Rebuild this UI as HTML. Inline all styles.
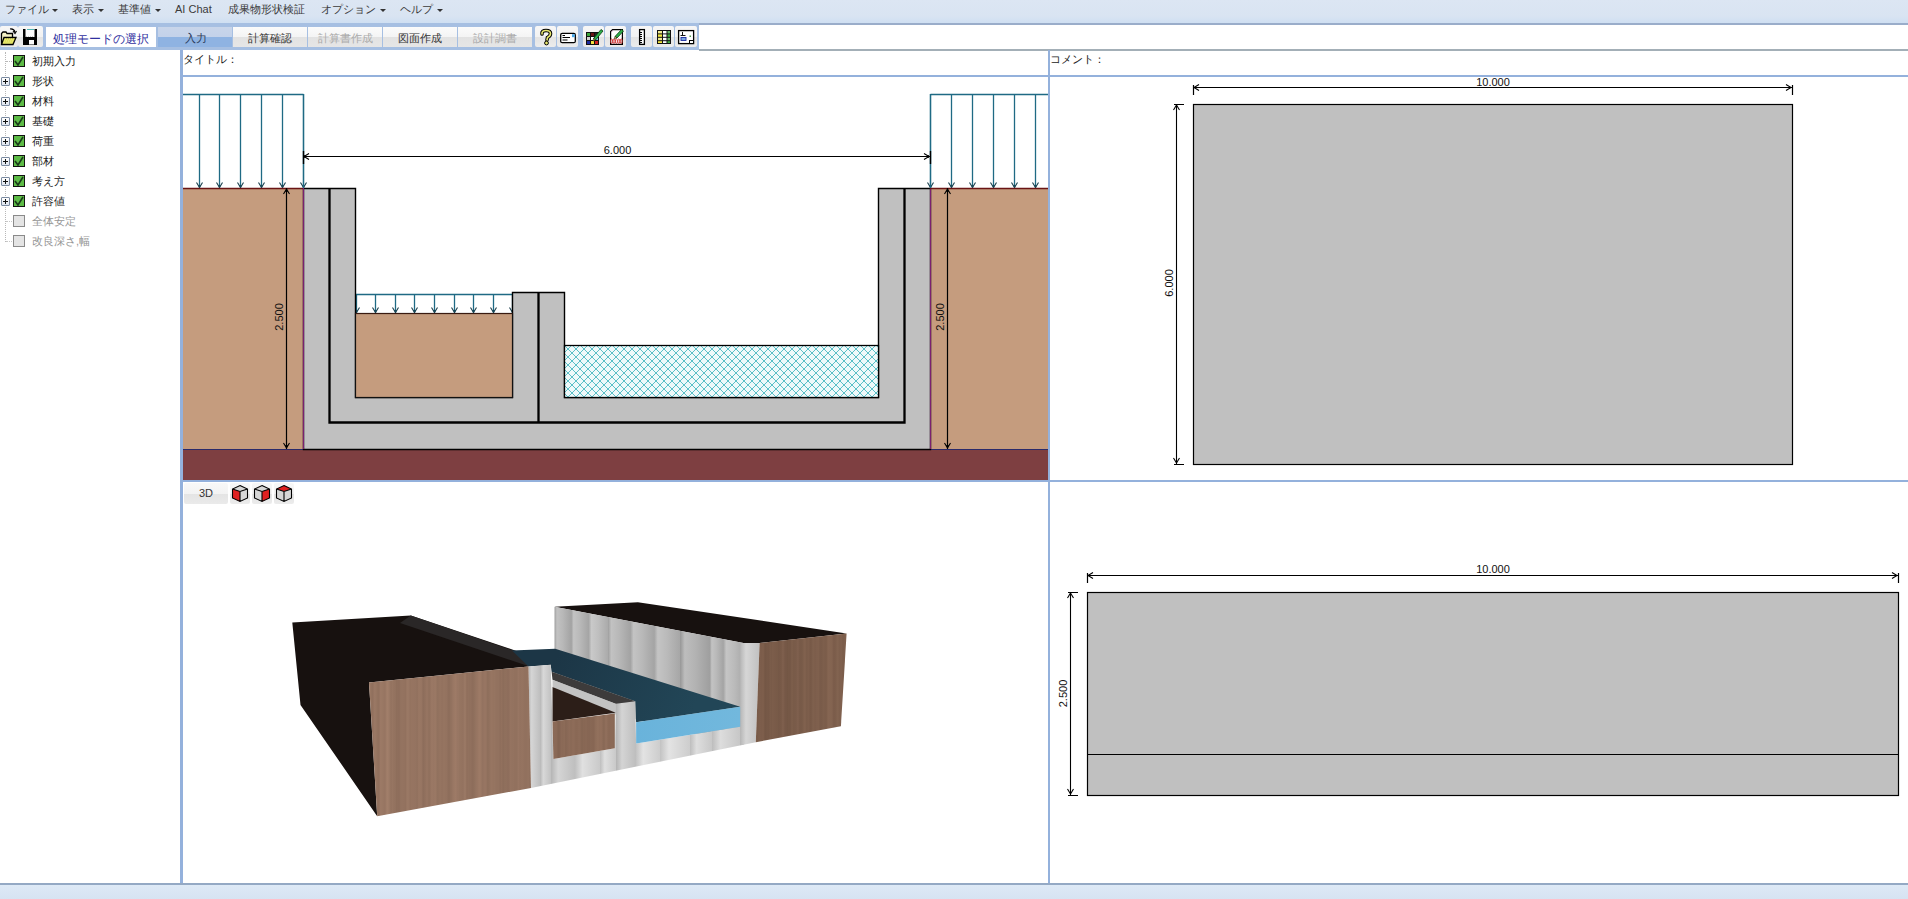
<!DOCTYPE html>
<html><head><meta charset="utf-8">
<style>
*{margin:0;padding:0;box-sizing:border-box}
html,body{width:1908px;height:899px;overflow:hidden;background:#fff;font-family:"Liberation Sans",sans-serif;color:#222}
.a{position:absolute}
#menubar{left:0;top:0;width:1908px;height:23px;background:linear-gradient(#dce6f3 0%,#d9e4f2 70%,#cfdff2 100%)}
.mi{position:absolute;top:3px;font-size:11px;color:#3a3a3a;white-space:nowrap;line-height:12px}
.dd{position:absolute;top:9px;width:0;height:0;border-left:3px solid transparent;border-right:3px solid transparent;border-top:3px solid #333}
#toolbar{left:0;top:23px;width:699px;height:27px;background:#a6bfe2}
#tbright{left:699px;top:23px;width:1209px;height:28px;background:#fff;border-top:2px solid #9aadca;border-bottom:2px solid #a3afb7}
.btn{position:absolute;top:3px;height:21px;background:linear-gradient(#f7f7f7 0%,#f2f2f2 50%,#e3e3e3 51%,#ececec 100%);border-radius:2px}
.tab{position:absolute;top:4px;height:20px;font-size:11px;text-align:center;line-height:22px;background:linear-gradient(#fbfbfb 0%,#f4f4f4 50%,#e2e2e2 51%,#e6e6e6 100%)}
.tree{position:absolute;left:0;font-size:11px;line-height:12px;white-space:nowrap}
.cb{position:absolute;left:13px;width:12px;height:12px;border:1px solid #111;background:#5dbb46}
.cbg{position:absolute;left:13px;width:12px;height:12px;border:1px solid #8a8a8a;background:#e4e4e4}
.pl{position:absolute;left:1px;width:9px;height:9px;border:1px solid #7a8aa0;border-radius:1px;background:linear-gradient(#fff,#dde4ee)}
.pl:before{content:"";position:absolute;left:1px;top:3px;width:5px;height:1px;background:#111}
.pl:after{content:"";position:absolute;left:3px;top:1px;width:1px;height:5px;background:#111}
.tt{position:absolute;left:32px;font-size:11px;color:#222}
</style></head><body>
<div id="menubar" class="a">
 <span class="mi" style="left:5px">ファイル</span><i class="dd" style="left:52px"></i>
 <span class="mi" style="left:72px">表示</span><i class="dd" style="left:98px"></i>
 <span class="mi" style="left:118px">基準値</span><i class="dd" style="left:155px"></i>
 <span class="mi" style="left:175px">AI Chat</span>
 <span class="mi" style="left:228px">成果物形状検証</span>
 <span class="mi" style="left:321px">オプション</span><i class="dd" style="left:380px"></i>
 <span class="mi" style="left:400px">ヘルプ</span><i class="dd" style="left:437px"></i>
</div>
<div id="toolbar" class="a">
 <div class="btn" style="left:0;width:18px"></div>
 <div class="btn" style="left:18px;width:25px"></div>
 <svg class="a" style="left:0;top:3px" width="42" height="21" viewBox="0 26 42 21">
  <path d="M1.5 44.5 V33.5 L3 32 H6 L7 33.5 H12.5 V37" fill="#f6f3c8" stroke="#000" stroke-width="1.3"/>
  <path d="M1.5 44.5 L4 37.5 H16 L13 44.5 Z" fill="#dede5a" stroke="#000" stroke-width="1.3"/>
  <path d="M5 39 H14 M4 41 H13 M3.5 43 H12" stroke="#f2f29a" stroke-width="0.8" stroke-dasharray="1 1"/>
  <path d="M10 29 Q14 28.5 15 32" fill="none" stroke="#000" stroke-width="1.2"/>
  <path d="M13 31 L15 33.5 L16.5 31" fill="none" stroke="#000" stroke-width="1.1"/>
  <path d="M23 29 H37 V45 H23 Z" fill="#000"/>
  <rect x="25.5" y="29" width="9" height="8" fill="#fafafa"/>
  <path d="M26 36.5 H34" stroke="#bbb" stroke-width="0.8" stroke-dasharray="1 1"/>
  <rect x="29" y="40" width="5" height="4.5" fill="#fafafa"/>
  <rect x="27" y="29" width="7" height="0.8" fill="#2aa8a8"/>
 </svg>
 <div class="a" style="left:46px;top:4px;width:110px;height:20px;background:#fff"></div>
 <span class="a" style="left:53px;top:9px;font-size:12px;line-height:14px;color:#3030a0;white-space:nowrap">処理モードの選択</span>
 <div class="a" style="left:158px;top:4px;width:74px;height:20px;background:linear-gradient(#c8d5ea 0%,#c3d2ea 50%,#8fb3e2 51%,#8fb3e2 100%)"></div>
 <span class="a" style="left:185px;top:9px;font-size:11px;line-height:12px;color:#2a3a5a">入力</span>
 <div class="tab" style="left:233px;width:74px;color:#333">計算確認</div>
 <div class="tab" style="left:308px;width:74px;color:#aaa">計算書作成</div>
 <div class="tab" style="left:383px;width:74px;color:#333">図面作成</div>
 <div class="tab" style="left:458px;width:74px;color:#aaa">設計調書</div>
 <div class="btn" style="left:535px;width:21px"></div>
 <div class="btn" style="left:557px;width:21px"></div>
 <div class="btn" style="left:583px;width:21px"></div>
 <div class="btn" style="left:605px;width:21px"></div>
 <div class="btn" style="left:631px;width:21px"></div>
 <div class="btn" style="left:653px;width:21px"></div>
 <div class="btn" style="left:675px;width:22px"></div>
<svg class="a" style="left:535px;top:3px" width="162" height="21" viewBox="535 26 162 21">
  <!-- ? -->
  <path d="M542 34 Q541.5 30.5 546 30.5 Q550.5 30.5 550.5 33.5 Q550.5 36 547.5 37.5 L547 40" fill="none" stroke="#000" stroke-width="3.6" stroke-linecap="round"/>
  <path d="M542 34 Q541.5 30.5 546 30.5 Q550.5 30.5 550.5 33.5 Q550.5 36 547.5 37.5 L547 40" fill="none" stroke="#e6e66e" stroke-width="1.6" stroke-linecap="round"/>
  <circle cx="546.5" cy="43" r="1.9" fill="#e6e66e" stroke="#000" stroke-width="1"/>
  <!-- card -->
  <rect x="560.7" y="33.4" width="14.6" height="9.3" rx="1.5" fill="#fff" stroke="#000" stroke-width="1.3"/>
  <rect x="562.5" y="35" width="2.5" height="1" fill="#000"/><rect x="562.5" y="37" width="7.5" height="1" fill="#000"/><rect x="562.5" y="39.5" width="5" height="1" fill="#000"/>
  <rect x="572" y="34.2" width="2.8" height="3" fill="#4aa8e8"/>
  <!-- grid pencil -->
  <rect x="586" y="32" width="13" height="13" fill="#111"/>
  <rect x="587" y="33" width="3" height="3" fill="#3aa63a"/><rect x="591" y="33" width="3" height="3" fill="#6a1414"/><rect x="595" y="33" width="3" height="3" fill="#222"/>
  <rect x="587" y="37" width="3" height="3" fill="#d0d0d0"/><rect x="591" y="37" width="3" height="3" fill="#fff"/><rect x="595" y="37" width="3" height="3" fill="#70d0e8"/>
  <rect x="587" y="41" width="3" height="3" fill="#1a2aa0"/><rect x="591" y="41" width="3" height="3" fill="#f2e040"/><rect x="595" y="41" width="3" height="3" fill="#d02020"/>
  <path d="M593.5 38.5 L601 29.5 L603 31 L595.5 40 Z" fill="#2cb04a" stroke="#0a3a10" stroke-width="0.8"/>
  <path d="M593.5 38.5 L595.5 40 L593 41 Z" fill="#f0e060" stroke="#000" stroke-width="0.5"/>
  <!-- doc pencil -->
  <path d="M610.6 31.5 L612.6 29.6 H622.4 V44.4 H610.6 Z" fill="#fff" stroke="#000" stroke-width="1.2"/>
  <path d="M611.2 31.5 L612.6 30.2 V31.5 Z" fill="#e8a0d0"/>
  <g fill="none" stroke="#d03030" stroke-width="0.9"><ellipse cx="611.6" cy="41.2" rx="1" ry="2.3"/><ellipse cx="614" cy="41.2" rx="1" ry="2.3"/><ellipse cx="616.4" cy="41.2" rx="1" ry="2.3"/><ellipse cx="618.8" cy="41.2" rx="1" ry="2.3"/><ellipse cx="621.2" cy="41.2" rx="1" ry="2.3"/></g>
  <path d="M615 36.5 L621.5 29.5 L623.5 31 L617 38 Z" fill="#2cb04a" stroke="#0a3a10" stroke-width="0.8"/>
  <path d="M615 36.5 L617 38 L614.2 38.8 Z" fill="#f0e060" stroke="#000" stroke-width="0.5"/>
  <!-- ruler -->
  <rect x="639.6" y="29.6" width="4.8" height="14.8" fill="#fff" stroke="#000" stroke-width="1.3"/>
  <path d="M640 32.5h2M640 34.5h1.5M640 36.5h2M640 38.5h1.5M640 40.5h2M640 42.5h1.5" stroke="#000" stroke-width="1" shape-rendering="crispEdges"/>
  <!-- table -->
  <rect x="657" y="30" width="14" height="14" fill="#111"/>
  <rect x="658" y="31" width="4" height="2.4" fill="#f0ea90"/><rect x="663" y="31" width="3.5" height="2.4" fill="#fff"/><rect x="667.5" y="31" width="2.5" height="2.4" fill="#6ab86a"/>
  <rect x="658" y="34.4" width="4" height="2.4" fill="#f2e640"/><rect x="663" y="34.4" width="3.5" height="2.4" fill="#fff"/><rect x="667.5" y="34.4" width="2.5" height="2.4" fill="#40b040"/>
  <rect x="658" y="37.8" width="4" height="2.4" fill="#f0ea90"/><rect x="663" y="37.8" width="3.5" height="2.4" fill="#fff"/><rect x="667.5" y="37.8" width="2.5" height="2.4" fill="#6ab86a"/>
  <rect x="658" y="41.2" width="4" height="1.8" fill="#f2e640"/><rect x="663" y="41.2" width="3.5" height="1.8" fill="#fff"/><rect x="667.5" y="41.2" width="2.5" height="1.8" fill="#40b040"/>
  <!-- layout -->
  <rect x="678.6" y="30.6" width="15" height="13" fill="#fff" stroke="#000" stroke-width="1.3"/>
  <path d="M682.5 32 v3.5 M680.5 35.5 h5" stroke="#111" stroke-width="1"/>
  <rect x="681" y="37.5" width="5" height="3" fill="#7aa8e0" stroke="#1a2aa0" stroke-width="0.9"/>
  <rect x="689.5" y="35.5" width="1.5" height="1.5" fill="#4a9a4a"/>
  <rect x="689.5" y="40.5" width="4" height="3" fill="#fff" stroke="#000" stroke-width="1"/>
 </svg>
</div>
<div id="tbright" class="a"></div>

<!-- left tree -->
<div class="a" style="left:0;top:50px;width:180px;height:833px;background:#fff"></div>
<div class="a" style="left:5px;top:52px;width:0;height:190px;border-left:1px dotted #b8b8b8"></div><div class="a" style="left:6px;top:221px;width:6px;height:0;border-top:1px dotted #c8c8c8"></div><div class="a" style="left:6px;top:241px;width:6px;height:0;border-top:1px dotted #c8c8c8"></div>
<div class="a" style="left:6px;top:61px;width:6px;height:0;border-top:1px dotted #b8b8b8"></div>
<div class="cb" style="top:55px"><svg width="10" height="10" viewBox="0 0 10 10" style="position:absolute;left:0;top:0"><path d="M1 5 L4 9 L9 1" fill="none" stroke="#1a3a1a" stroke-width="1.6"/></svg></div>
<span class="tt" style="top:54px">初期入力</span>
<div class="cb" style="top:75px"><svg width="10" height="10" viewBox="0 0 10 10" style="position:absolute;left:0;top:0"><path d="M1 5 L4 9 L9 1" fill="none" stroke="#1a3a1a" stroke-width="1.6"/></svg></div>
<span class="tt" style="top:74px">形状</span>
<div class="pl" style="top:77px"></div>
<div class="cb" style="top:95px"><svg width="10" height="10" viewBox="0 0 10 10" style="position:absolute;left:0;top:0"><path d="M1 5 L4 9 L9 1" fill="none" stroke="#1a3a1a" stroke-width="1.6"/></svg></div>
<span class="tt" style="top:94px">材料</span>
<div class="pl" style="top:97px"></div>
<div class="cb" style="top:115px"><svg width="10" height="10" viewBox="0 0 10 10" style="position:absolute;left:0;top:0"><path d="M1 5 L4 9 L9 1" fill="none" stroke="#1a3a1a" stroke-width="1.6"/></svg></div>
<span class="tt" style="top:114px">基礎</span>
<div class="pl" style="top:117px"></div>
<div class="cb" style="top:135px"><svg width="10" height="10" viewBox="0 0 10 10" style="position:absolute;left:0;top:0"><path d="M1 5 L4 9 L9 1" fill="none" stroke="#1a3a1a" stroke-width="1.6"/></svg></div>
<span class="tt" style="top:134px">荷重</span>
<div class="pl" style="top:137px"></div>
<div class="cb" style="top:155px"><svg width="10" height="10" viewBox="0 0 10 10" style="position:absolute;left:0;top:0"><path d="M1 5 L4 9 L9 1" fill="none" stroke="#1a3a1a" stroke-width="1.6"/></svg></div>
<span class="tt" style="top:154px">部材</span>
<div class="pl" style="top:157px"></div>
<div class="cb" style="top:175px"><svg width="10" height="10" viewBox="0 0 10 10" style="position:absolute;left:0;top:0"><path d="M1 5 L4 9 L9 1" fill="none" stroke="#1a3a1a" stroke-width="1.6"/></svg></div>
<span class="tt" style="top:174px">考え方</span>
<div class="pl" style="top:177px"></div>
<div class="cb" style="top:195px"><svg width="10" height="10" viewBox="0 0 10 10" style="position:absolute;left:0;top:0"><path d="M1 5 L4 9 L9 1" fill="none" stroke="#1a3a1a" stroke-width="1.6"/></svg></div>
<span class="tt" style="top:194px">許容値</span>
<div class="pl" style="top:197px"></div>
<div class="cbg" style="top:215px"></div>
<span class="tt" style="top:214px;color:#959595">全体安定</span>
<div class="cbg" style="top:235px"></div>
<span class="tt" style="top:234px;color:#959595">改良深さ,幅</span>
<div class="a" style="left:180px;top:50px;width:3px;height:835px;background:#94b1dc"></div>

<!-- title rows -->
<div class="a" style="left:183px;top:51px;width:865px;height:24px;font-size:11px;line-height:16px;padding-left:0px">タイトル：</div>
<div class="a" style="left:1050px;top:51px;width:858px;height:24px;font-size:11px;line-height:16px">コメント：</div>
<div class="a" style="left:183px;top:75px;width:1725px;height:2px;background:#94b1dc"></div>
<div class="a" style="left:1048px;top:50px;width:2px;height:833px;background:#94b1dc"></div>
<div class="a" style="left:183px;top:480px;width:1725px;height:2px;background:#94b1dc"></div>
<div class="a" style="left:0;top:883px;width:1908px;height:2px;background:#94a9c4"></div>
<div class="a" style="left:0;top:885px;width:1908px;height:14px;background:linear-gradient(#dde9f6,#d6e3f2)"></div>

<!-- TL drawing -->
<svg class="a" style="left:183px;top:77px" width="865" height="403" viewBox="183 77 865 403"><defs><pattern id="hatch" width="8" height="8" patternUnits="userSpaceOnUse" x="564" y="345"><rect width="8" height="8" fill="#eef9fa"/><path d="M0 0 L8 8 M8 0 L0 8" stroke="#52bcc4" stroke-width="0.95"/></pattern></defs><rect x="183" y="188" width="120" height="261" fill="#c59c7e"/><rect x="930" y="188" width="118" height="261" fill="#c59c7e"/><path d="M183 94.5 H303.5" fill="none" stroke="#1f6a84" stroke-width="1.3"/><path d="M199.5 94 V188" stroke="#1f6a84" stroke-width="1.3"/><path d="M196.5 182.5 L199.5 187.5 L202.5 182.5" fill="none" stroke="#1a3f4c" stroke-width="1.1"/><path d="M198 185 L199.5 188 L201 185 Z" fill="#184a5a"/><path d="M219.5 94 V188" stroke="#1f6a84" stroke-width="1.3"/><path d="M216.5 182.5 L219.5 187.5 L222.5 182.5" fill="none" stroke="#1a3f4c" stroke-width="1.1"/><path d="M218 185 L219.5 188 L221 185 Z" fill="#184a5a"/><path d="M240.5 94 V188" stroke="#1f6a84" stroke-width="1.3"/><path d="M237.5 182.5 L240.5 187.5 L243.5 182.5" fill="none" stroke="#1a3f4c" stroke-width="1.1"/><path d="M239 185 L240.5 188 L242 185 Z" fill="#184a5a"/><path d="M261.5 94 V188" stroke="#1f6a84" stroke-width="1.3"/><path d="M258.5 182.5 L261.5 187.5 L264.5 182.5" fill="none" stroke="#1a3f4c" stroke-width="1.1"/><path d="M260 185 L261.5 188 L263 185 Z" fill="#184a5a"/><path d="M282.5 94 V188" stroke="#1f6a84" stroke-width="1.3"/><path d="M279.5 182.5 L282.5 187.5 L285.5 182.5" fill="none" stroke="#1a3f4c" stroke-width="1.1"/><path d="M281 185 L282.5 188 L284 185 Z" fill="#184a5a"/><path d="M303.5 94 V188" stroke="#1f6a84" stroke-width="1.3"/><path d="M300.5 182.5 L303.5 187.5 L306.5 182.5" fill="none" stroke="#1a3f4c" stroke-width="1.1"/><path d="M302 185 L303.5 188 L305 185 Z" fill="#184a5a"/><path d="M930.5 94.5 H1048" fill="none" stroke="#1f6a84" stroke-width="1.3"/><path d="M930.5 94 V188" stroke="#1f6a84" stroke-width="1.3"/><path d="M927.5 182.5 L930.5 187.5 L933.5 182.5" fill="none" stroke="#1a3f4c" stroke-width="1.1"/><path d="M929 185 L930.5 188 L932 185 Z" fill="#184a5a"/><path d="M951.5 94 V188" stroke="#1f6a84" stroke-width="1.3"/><path d="M948.5 182.5 L951.5 187.5 L954.5 182.5" fill="none" stroke="#1a3f4c" stroke-width="1.1"/><path d="M950 185 L951.5 188 L953 185 Z" fill="#184a5a"/><path d="M972.5 94 V188" stroke="#1f6a84" stroke-width="1.3"/><path d="M969.5 182.5 L972.5 187.5 L975.5 182.5" fill="none" stroke="#1a3f4c" stroke-width="1.1"/><path d="M971 185 L972.5 188 L974 185 Z" fill="#184a5a"/><path d="M993.5 94 V188" stroke="#1f6a84" stroke-width="1.3"/><path d="M990.5 182.5 L993.5 187.5 L996.5 182.5" fill="none" stroke="#1a3f4c" stroke-width="1.1"/><path d="M992 185 L993.5 188 L995 185 Z" fill="#184a5a"/><path d="M1014.5 94 V188" stroke="#1f6a84" stroke-width="1.3"/><path d="M1011.5 182.5 L1014.5 187.5 L1017.5 182.5" fill="none" stroke="#1a3f4c" stroke-width="1.1"/><path d="M1013 185 L1014.5 188 L1016 185 Z" fill="#184a5a"/><path d="M1035.5 94 V188" stroke="#1f6a84" stroke-width="1.3"/><path d="M1032.5 182.5 L1035.5 187.5 L1038.5 182.5" fill="none" stroke="#1a3f4c" stroke-width="1.1"/><path d="M1034 185 L1035.5 188 L1037 185 Z" fill="#184a5a"/><path d="M355 294.5 H512.5" fill="none" stroke="#1f6a84" stroke-width="1.3"/><path d="M356.5 294 V313" stroke="#1f6a84" stroke-width="1.3"/><path d="M353.5 307.5 L356.5 312.5 L359.5 307.5" fill="none" stroke="#1a3f4c" stroke-width="1.1"/><path d="M355 310 L356.5 313 L358 310 Z" fill="#184a5a"/><path d="M375.5 294 V313" stroke="#1f6a84" stroke-width="1.3"/><path d="M372.5 307.5 L375.5 312.5 L378.5 307.5" fill="none" stroke="#1a3f4c" stroke-width="1.1"/><path d="M374 310 L375.5 313 L377 310 Z" fill="#184a5a"/><path d="M395.5 294 V313" stroke="#1f6a84" stroke-width="1.3"/><path d="M392.5 307.5 L395.5 312.5 L398.5 307.5" fill="none" stroke="#1a3f4c" stroke-width="1.1"/><path d="M394 310 L395.5 313 L397 310 Z" fill="#184a5a"/><path d="M414.5 294 V313" stroke="#1f6a84" stroke-width="1.3"/><path d="M411.5 307.5 L414.5 312.5 L417.5 307.5" fill="none" stroke="#1a3f4c" stroke-width="1.1"/><path d="M413 310 L414.5 313 L416 310 Z" fill="#184a5a"/><path d="M434.5 294 V313" stroke="#1f6a84" stroke-width="1.3"/><path d="M431.5 307.5 L434.5 312.5 L437.5 307.5" fill="none" stroke="#1a3f4c" stroke-width="1.1"/><path d="M433 310 L434.5 313 L436 310 Z" fill="#184a5a"/><path d="M454.5 294 V313" stroke="#1f6a84" stroke-width="1.3"/><path d="M451.5 307.5 L454.5 312.5 L457.5 307.5" fill="none" stroke="#1a3f4c" stroke-width="1.1"/><path d="M453 310 L454.5 313 L456 310 Z" fill="#184a5a"/><path d="M473.5 294 V313" stroke="#1f6a84" stroke-width="1.3"/><path d="M470.5 307.5 L473.5 312.5 L476.5 307.5" fill="none" stroke="#1a3f4c" stroke-width="1.1"/><path d="M472 310 L473.5 313 L475 310 Z" fill="#184a5a"/><path d="M493.5 294 V313" stroke="#1f6a84" stroke-width="1.3"/><path d="M490.5 307.5 L493.5 312.5 L496.5 307.5" fill="none" stroke="#1a3f4c" stroke-width="1.1"/><path d="M492 310 L493.5 313 L495 310 Z" fill="#184a5a"/><path d="M512.5 294 V313" stroke="#1f6a84" stroke-width="1.3"/><path d="M509.5 307.5 L512.5 312.5 L515.5 307.5" fill="none" stroke="#1a3f4c" stroke-width="1.1"/><path d="M511 310 L512.5 313 L514 310 Z" fill="#184a5a"/><rect x="183" y="449" width="865" height="31" fill="#7e3f41"/><path d="M183 449.5 H1048" stroke="#2a2a6a" stroke-width="1.2"/><path d="M303.5 188.5 H355.5 V397.5 H512.5 V292.5 H564.5 V397.5 H878.5 V188.5 H930.5 V449.5 H303.5 Z" fill="#c0c0c0" stroke="#000" stroke-width="1.4"/><path d="M303.5 188 V449 M930.5 188 V449" stroke="#7a2070" stroke-width="1.2"/><path d="M183 188.5 H303 M930 188.5 H1048" stroke="#6a1414" stroke-width="1.4"/><path d="M329.5 188 V422.5 H904.5 V188 M538.5 292 V422.5" fill="none" stroke="#000" stroke-width="2.3"/><rect x="355.5" y="313.5" width="157" height="84" fill="#c59c7e" stroke="#111" stroke-width="1.2"/><path d="M355.5 313.5 H512.5" stroke="#3a1a10" stroke-width="1.2"/><rect x="564.5" y="345.5" width="314" height="52" fill="url(#hatch)" stroke="#000" stroke-width="1.3"/><path d="M303.5 94 V188 M930.5 94 V188" stroke="#1f6a84" stroke-width="1.3"/><path d="M303 156.5 H930" stroke="#000" stroke-width="1.2"/><path d="M309 153.5 L304 156.5 L309 159.5 M924 153.5 L929 156.5 L924 159.5" fill="none" stroke="#000" stroke-width="1.1"/><path d="M304 155 L307 156.5 L304 158 Z M929 155 L926 156.5 L929 158 Z" fill="#000"/><path d="M303.5 151 V164 M930.5 151 V164" stroke="#000" stroke-width="1.4"/><text x="617.5" y="154" font-size="11" text-anchor="middle" fill="#111">6.000</text><path d="M286.5 188 V449" stroke="#000" stroke-width="1.2"/><path d="M283.5 194 L286.5 189 L289.5 194 M283.5 443 L286.5 448 L289.5 443" fill="none" stroke="#000" stroke-width="1.1"/><path d="M285 192 L286.5 189 L288 192 Z M285 445 L286.5 448 L288 445 Z" fill="#000"/><path d="M947.5 188 V449" stroke="#000" stroke-width="1.2"/><path d="M944.5 194 L947.5 189 L950.5 194 M944.5 443 L947.5 448 L950.5 443" fill="none" stroke="#000" stroke-width="1.1"/><path d="M946 192 L947.5 189 L949 192 Z M946 445 L947.5 448 L949 445 Z" fill="#000"/><text transform="translate(283,317) rotate(-90)" font-size="11" text-anchor="middle" fill="#111">2.500</text><text transform="translate(944,317) rotate(-90)" font-size="11" text-anchor="middle" fill="#111">2.500</text></svg>
<!-- right drawings -->
<svg class="a" style="left:1050px;top:77px" width="858" height="403" viewBox="1050 77 858 403"><rect x="1193.5" y="104.5" width="599" height="360" fill="#c0c0c0" stroke="#000" stroke-width="1.2"/><path d="M1193 87.5 H1792" stroke="#000" stroke-width="1.1"/><path d="M1199 84.5 L1194 87.5 L1199 90.5 M1786 84.5 L1791 87.5 L1786 90.5" fill="none" stroke="#000" stroke-width="1.1"/><path d="M1193.5 85 V95 M1792.5 85 V95" stroke="#000" stroke-width="1.2"/><text x="1493.0" y="86" font-size="11" text-anchor="middle" fill="#111">10.000</text><path d="M1176.5 104 V464" stroke="#000" stroke-width="1.1"/><path d="M1173.5 110 L1176.5 105 L1179.5 110 M1173.5 458 L1176.5 463 L1179.5 458" fill="none" stroke="#000" stroke-width="1.1"/><path d="M1174 104.5 H1184 M1174 464.5 H1184" stroke="#000" stroke-width="1.2"/><text transform="translate(1173,283) rotate(-90)" font-size="11" text-anchor="middle" fill="#111">6.000</text></svg>
<svg class="a" style="left:1050px;top:482px" width="858" height="401" viewBox="1050 482 858 401"><rect x="1087.5" y="592.5" width="811" height="203" fill="#c0c0c0" stroke="#000" stroke-width="1.2"/><path d="M1087 754.5 H1898" stroke="#000" stroke-width="1.1"/><path d="M1087 575.5 H1898" stroke="#000" stroke-width="1.1"/><path d="M1093 572.5 L1088 575.5 L1093 578.5 M1892 572.5 L1897 575.5 L1892 578.5" fill="none" stroke="#000" stroke-width="1.1"/><path d="M1087.5 573 V583 M1898.5 573 V583" stroke="#000" stroke-width="1.2"/><text x="1493.0" y="573" font-size="11" text-anchor="middle" fill="#111">10.000</text><path d="M1070.5 592 V795" stroke="#000" stroke-width="1.1"/><path d="M1067.5 598 L1070.5 593 L1073.5 598 M1067.5 789 L1070.5 794 L1073.5 789" fill="none" stroke="#000" stroke-width="1.1"/><path d="M1068 592.5 H1078 M1068 795.5 H1078" stroke="#000" stroke-width="1.2"/><text transform="translate(1067,693.5) rotate(-90)" font-size="11" text-anchor="middle" fill="#111">2.500</text></svg>
<!-- 3D -->
<svg class="a" style="left:183px;top:482px" width="865" height="401" viewBox="183 482 865 401"><defs><linearGradient id="wood" gradientUnits="userSpaceOnUse" x1="369" y1="0" x2="531" y2="0"><stop offset="0.0000" stop-color="#987663"/><stop offset="0.0062" stop-color="#9a7864"/><stop offset="0.0123" stop-color="#957460"/><stop offset="0.0185" stop-color="#91715e"/><stop offset="0.0247" stop-color="#91705e"/><stop offset="0.0309" stop-color="#997763"/><stop offset="0.0370" stop-color="#9a7865"/><stop offset="0.0432" stop-color="#977662"/><stop offset="0.0494" stop-color="#957460"/><stop offset="0.0556" stop-color="#91715e"/><stop offset="0.0617" stop-color="#92715e"/><stop offset="0.0679" stop-color="#997764"/><stop offset="0.0741" stop-color="#9e7b67"/><stop offset="0.0802" stop-color="#987763"/><stop offset="0.0864" stop-color="#9b7965"/><stop offset="0.0926" stop-color="#967461"/><stop offset="0.0988" stop-color="#987663"/><stop offset="0.1049" stop-color="#9a7864"/><stop offset="0.1111" stop-color="#a3806b"/><stop offset="0.1173" stop-color="#a07d69"/><stop offset="0.1235" stop-color="#9d7b67"/><stop offset="0.1296" stop-color="#987763"/><stop offset="0.1358" stop-color="#93725f"/><stop offset="0.1420" stop-color="#967562"/><stop offset="0.1481" stop-color="#977662"/><stop offset="0.1543" stop-color="#92715e"/><stop offset="0.1605" stop-color="#957461"/><stop offset="0.1667" stop-color="#8f6f5c"/><stop offset="0.1728" stop-color="#8d6d5a"/><stop offset="0.1790" stop-color="#91705e"/><stop offset="0.1852" stop-color="#8b6b59"/><stop offset="0.1914" stop-color="#93725f"/><stop offset="0.1975" stop-color="#92725f"/><stop offset="0.2037" stop-color="#957461"/><stop offset="0.2099" stop-color="#93725f"/><stop offset="0.2160" stop-color="#947360"/><stop offset="0.2222" stop-color="#92715e"/><stop offset="0.2284" stop-color="#92715e"/><stop offset="0.2346" stop-color="#9c7a66"/><stop offset="0.2407" stop-color="#987763"/><stop offset="0.2469" stop-color="#9a7865"/><stop offset="0.2531" stop-color="#92715e"/><stop offset="0.2593" stop-color="#967561"/><stop offset="0.2654" stop-color="#967461"/><stop offset="0.2716" stop-color="#957461"/><stop offset="0.2778" stop-color="#967461"/><stop offset="0.2840" stop-color="#947360"/><stop offset="0.2901" stop-color="#957461"/><stop offset="0.2963" stop-color="#90705d"/><stop offset="0.3025" stop-color="#957360"/><stop offset="0.3086" stop-color="#9a7864"/><stop offset="0.3148" stop-color="#967561"/><stop offset="0.3210" stop-color="#997764"/><stop offset="0.3272" stop-color="#947360"/><stop offset="0.3333" stop-color="#8d6d5b"/><stop offset="0.3395" stop-color="#8e6e5c"/><stop offset="0.3457" stop-color="#92715e"/><stop offset="0.3519" stop-color="#93725f"/><stop offset="0.3580" stop-color="#987663"/><stop offset="0.3642" stop-color="#93725f"/><stop offset="0.3704" stop-color="#90705d"/><stop offset="0.3765" stop-color="#92715e"/><stop offset="0.3827" stop-color="#987663"/><stop offset="0.3889" stop-color="#9b7965"/><stop offset="0.3951" stop-color="#987663"/><stop offset="0.4012" stop-color="#997764"/><stop offset="0.4074" stop-color="#9a7864"/><stop offset="0.4136" stop-color="#9a7864"/><stop offset="0.4198" stop-color="#91715e"/><stop offset="0.4259" stop-color="#92725f"/><stop offset="0.4321" stop-color="#93725f"/><stop offset="0.4383" stop-color="#967561"/><stop offset="0.4444" stop-color="#947360"/><stop offset="0.4506" stop-color="#93725f"/><stop offset="0.4568" stop-color="#93725f"/><stop offset="0.4630" stop-color="#977662"/><stop offset="0.4691" stop-color="#93725f"/><stop offset="0.4753" stop-color="#957460"/><stop offset="0.4815" stop-color="#92715f"/><stop offset="0.4877" stop-color="#8f6f5c"/><stop offset="0.4938" stop-color="#8c6c5a"/><stop offset="0.5000" stop-color="#90705d"/><stop offset="0.5062" stop-color="#92725f"/><stop offset="0.5123" stop-color="#947360"/><stop offset="0.5185" stop-color="#997764"/><stop offset="0.5247" stop-color="#9a7864"/><stop offset="0.5309" stop-color="#9d7a66"/><stop offset="0.5370" stop-color="#9e7b67"/><stop offset="0.5432" stop-color="#987663"/><stop offset="0.5494" stop-color="#997764"/><stop offset="0.5556" stop-color="#977662"/><stop offset="0.5617" stop-color="#947360"/><stop offset="0.5679" stop-color="#967561"/><stop offset="0.5741" stop-color="#93725f"/><stop offset="0.5802" stop-color="#947360"/><stop offset="0.5864" stop-color="#967562"/><stop offset="0.5926" stop-color="#9d7b67"/><stop offset="0.5988" stop-color="#957460"/><stop offset="0.6049" stop-color="#8f6e5c"/><stop offset="0.6111" stop-color="#92715e"/><stop offset="0.6173" stop-color="#91715e"/><stop offset="0.6235" stop-color="#8f6f5c"/><stop offset="0.6296" stop-color="#92715f"/><stop offset="0.6358" stop-color="#8c6c5a"/><stop offset="0.6420" stop-color="#8e6e5c"/><stop offset="0.6481" stop-color="#8f6f5c"/><stop offset="0.6543" stop-color="#92725f"/><stop offset="0.6605" stop-color="#957461"/><stop offset="0.6667" stop-color="#977562"/><stop offset="0.6728" stop-color="#997763"/><stop offset="0.6790" stop-color="#9d7a66"/><stop offset="0.6852" stop-color="#9d7a66"/><stop offset="0.6914" stop-color="#9a7864"/><stop offset="0.6975" stop-color="#957461"/><stop offset="0.7037" stop-color="#92715f"/><stop offset="0.7099" stop-color="#987663"/><stop offset="0.7160" stop-color="#967461"/><stop offset="0.7222" stop-color="#987663"/><stop offset="0.7284" stop-color="#90705d"/><stop offset="0.7346" stop-color="#8e6e5b"/><stop offset="0.7407" stop-color="#91715e"/><stop offset="0.7469" stop-color="#93725f"/><stop offset="0.7531" stop-color="#977662"/><stop offset="0.7593" stop-color="#977562"/><stop offset="0.7654" stop-color="#957460"/><stop offset="0.7716" stop-color="#957460"/><stop offset="0.7778" stop-color="#967562"/><stop offset="0.7840" stop-color="#92715e"/><stop offset="0.7901" stop-color="#947360"/><stop offset="0.7963" stop-color="#91715e"/><stop offset="0.8025" stop-color="#947360"/><stop offset="0.8086" stop-color="#8c6c5a"/><stop offset="0.8148" stop-color="#91705d"/><stop offset="0.8210" stop-color="#92715e"/><stop offset="0.8272" stop-color="#8a6b59"/><stop offset="0.8333" stop-color="#8f6f5c"/><stop offset="0.8395" stop-color="#8f6f5c"/><stop offset="0.8457" stop-color="#90705d"/><stop offset="0.8519" stop-color="#8f6e5c"/><stop offset="0.8580" stop-color="#8d6d5b"/><stop offset="0.8642" stop-color="#8f6e5c"/><stop offset="0.8704" stop-color="#947360"/><stop offset="0.8765" stop-color="#967461"/><stop offset="0.8827" stop-color="#92725f"/><stop offset="0.8889" stop-color="#947360"/><stop offset="0.8951" stop-color="#93725f"/><stop offset="0.9012" stop-color="#91705d"/><stop offset="0.9074" stop-color="#93725f"/><stop offset="0.9136" stop-color="#90705d"/><stop offset="0.9198" stop-color="#987663"/><stop offset="0.9259" stop-color="#977562"/><stop offset="0.9321" stop-color="#92715e"/><stop offset="0.9383" stop-color="#957461"/><stop offset="0.9444" stop-color="#947360"/><stop offset="0.9506" stop-color="#957460"/><stop offset="0.9568" stop-color="#92715f"/><stop offset="0.9630" stop-color="#92715e"/><stop offset="0.9691" stop-color="#91715e"/><stop offset="0.9753" stop-color="#92715e"/><stop offset="0.9815" stop-color="#947360"/><stop offset="0.9877" stop-color="#92725f"/><stop offset="0.9938" stop-color="#8d6d5b"/><stop offset="1.0000" stop-color="#92715e"/></linearGradient><linearGradient id="wood2" gradientUnits="userSpaceOnUse" x1="756" y1="0" x2="847" y2="0"><stop offset="0.0000" stop-color="#7c5e4b"/><stop offset="0.0110" stop-color="#785a48"/><stop offset="0.0220" stop-color="#795b49"/><stop offset="0.0330" stop-color="#7c5e4b"/><stop offset="0.0440" stop-color="#7c5d4b"/><stop offset="0.0549" stop-color="#7d5e4c"/><stop offset="0.0659" stop-color="#7b5c4a"/><stop offset="0.0769" stop-color="#7f604d"/><stop offset="0.0879" stop-color="#7a5b49"/><stop offset="0.0989" stop-color="#745745"/><stop offset="0.1099" stop-color="#755746"/><stop offset="0.1209" stop-color="#765947"/><stop offset="0.1319" stop-color="#775947"/><stop offset="0.1429" stop-color="#755746"/><stop offset="0.1538" stop-color="#7c5e4b"/><stop offset="0.1648" stop-color="#795b49"/><stop offset="0.1758" stop-color="#795b49"/><stop offset="0.1868" stop-color="#7e5f4c"/><stop offset="0.1978" stop-color="#785a48"/><stop offset="0.2088" stop-color="#7c5d4b"/><stop offset="0.2198" stop-color="#775947"/><stop offset="0.2308" stop-color="#7a5c49"/><stop offset="0.2418" stop-color="#765947"/><stop offset="0.2527" stop-color="#755746"/><stop offset="0.2637" stop-color="#785a48"/><stop offset="0.2747" stop-color="#775947"/><stop offset="0.2857" stop-color="#7c5d4b"/><stop offset="0.2967" stop-color="#7f604e"/><stop offset="0.3077" stop-color="#7b5c4a"/><stop offset="0.3187" stop-color="#765847"/><stop offset="0.3297" stop-color="#765847"/><stop offset="0.3407" stop-color="#745745"/><stop offset="0.3516" stop-color="#735644"/><stop offset="0.3626" stop-color="#785a48"/><stop offset="0.3736" stop-color="#725544"/><stop offset="0.3846" stop-color="#7a5c4a"/><stop offset="0.3956" stop-color="#7c5e4b"/><stop offset="0.4066" stop-color="#7b5d4a"/><stop offset="0.4176" stop-color="#775947"/><stop offset="0.4286" stop-color="#7b5d4b"/><stop offset="0.4396" stop-color="#785a48"/><stop offset="0.4505" stop-color="#7e5f4d"/><stop offset="0.4615" stop-color="#7f604e"/><stop offset="0.4725" stop-color="#7b5c4a"/><stop offset="0.4835" stop-color="#765947"/><stop offset="0.4945" stop-color="#795b49"/><stop offset="0.5055" stop-color="#775a48"/><stop offset="0.5165" stop-color="#7c5e4b"/><stop offset="0.5275" stop-color="#7f604d"/><stop offset="0.5385" stop-color="#82624f"/><stop offset="0.5495" stop-color="#7c5e4b"/><stop offset="0.5604" stop-color="#795b49"/><stop offset="0.5714" stop-color="#7e5f4c"/><stop offset="0.5824" stop-color="#7c5d4b"/><stop offset="0.5934" stop-color="#785a48"/><stop offset="0.6044" stop-color="#775947"/><stop offset="0.6154" stop-color="#7b5d4b"/><stop offset="0.6264" stop-color="#7e604d"/><stop offset="0.6374" stop-color="#7f604d"/><stop offset="0.6484" stop-color="#7b5c4a"/><stop offset="0.6593" stop-color="#7e5f4d"/><stop offset="0.6703" stop-color="#7e5f4d"/><stop offset="0.6813" stop-color="#7f604d"/><stop offset="0.6923" stop-color="#7f604d"/><stop offset="0.7033" stop-color="#775948"/><stop offset="0.7143" stop-color="#7b5d4b"/><stop offset="0.7253" stop-color="#785a48"/><stop offset="0.7363" stop-color="#7e604d"/><stop offset="0.7473" stop-color="#7c5d4b"/><stop offset="0.7582" stop-color="#7c5e4b"/><stop offset="0.7692" stop-color="#7b5c4a"/><stop offset="0.7802" stop-color="#7e5f4c"/><stop offset="0.7912" stop-color="#866652"/><stop offset="0.8022" stop-color="#846451"/><stop offset="0.8132" stop-color="#856552"/><stop offset="0.8242" stop-color="#836450"/><stop offset="0.8352" stop-color="#846451"/><stop offset="0.8462" stop-color="#7d5e4c"/><stop offset="0.8571" stop-color="#7b5c4a"/><stop offset="0.8681" stop-color="#7c5d4b"/><stop offset="0.8791" stop-color="#7d5f4c"/><stop offset="0.8901" stop-color="#81624f"/><stop offset="0.9011" stop-color="#836451"/><stop offset="0.9121" stop-color="#7d5f4c"/><stop offset="0.9231" stop-color="#7e5f4d"/><stop offset="0.9341" stop-color="#81614f"/><stop offset="0.9451" stop-color="#7f604d"/><stop offset="0.9560" stop-color="#7a5c4a"/><stop offset="0.9670" stop-color="#7d5e4c"/><stop offset="0.9780" stop-color="#7f604d"/><stop offset="0.9890" stop-color="#81614f"/><stop offset="1.0000" stop-color="#846451"/></linearGradient><linearGradient id="wood3" gradientUnits="userSpaceOnUse" x1="552" y1="0" x2="615" y2="0"><stop offset="0.0000" stop-color="#8a6a57"/><stop offset="0.0159" stop-color="#886855"/><stop offset="0.0317" stop-color="#8c6b58"/><stop offset="0.0476" stop-color="#8a6957"/><stop offset="0.0635" stop-color="#8b6a57"/><stop offset="0.0794" stop-color="#886855"/><stop offset="0.0952" stop-color="#826351"/><stop offset="0.1111" stop-color="#826351"/><stop offset="0.1270" stop-color="#856553"/><stop offset="0.1429" stop-color="#8a6957"/><stop offset="0.1587" stop-color="#8c6b58"/><stop offset="0.1746" stop-color="#886855"/><stop offset="0.1905" stop-color="#8e6d5a"/><stop offset="0.2063" stop-color="#8a6956"/><stop offset="0.2222" stop-color="#856553"/><stop offset="0.2381" stop-color="#8a6a57"/><stop offset="0.2540" stop-color="#896856"/><stop offset="0.2698" stop-color="#8e6c59"/><stop offset="0.2857" stop-color="#8c6b58"/><stop offset="0.3016" stop-color="#896956"/><stop offset="0.3175" stop-color="#8c6b58"/><stop offset="0.3333" stop-color="#8e6c59"/><stop offset="0.3492" stop-color="#8d6c59"/><stop offset="0.3651" stop-color="#8b6a57"/><stop offset="0.3810" stop-color="#896855"/><stop offset="0.3968" stop-color="#8a6956"/><stop offset="0.4127" stop-color="#8a6956"/><stop offset="0.4286" stop-color="#8d6c59"/><stop offset="0.4444" stop-color="#8b6a57"/><stop offset="0.4603" stop-color="#886855"/><stop offset="0.4762" stop-color="#846552"/><stop offset="0.4921" stop-color="#876754"/><stop offset="0.5079" stop-color="#896855"/><stop offset="0.5238" stop-color="#866653"/><stop offset="0.5397" stop-color="#8b6a57"/><stop offset="0.5556" stop-color="#866653"/><stop offset="0.5714" stop-color="#876654"/><stop offset="0.5873" stop-color="#866653"/><stop offset="0.6032" stop-color="#866654"/><stop offset="0.6190" stop-color="#896956"/><stop offset="0.6349" stop-color="#866653"/><stop offset="0.6508" stop-color="#886755"/><stop offset="0.6667" stop-color="#866653"/><stop offset="0.6825" stop-color="#8d6c59"/><stop offset="0.6984" stop-color="#8f6e5a"/><stop offset="0.7143" stop-color="#906f5b"/><stop offset="0.7302" stop-color="#94725e"/><stop offset="0.7460" stop-color="#8f6e5a"/><stop offset="0.7619" stop-color="#906e5b"/><stop offset="0.7778" stop-color="#92705c"/><stop offset="0.7937" stop-color="#8f6d5a"/><stop offset="0.8095" stop-color="#8a6a57"/><stop offset="0.8254" stop-color="#886855"/><stop offset="0.8413" stop-color="#8d6c59"/><stop offset="0.8571" stop-color="#92705d"/><stop offset="0.8730" stop-color="#8e6d5a"/><stop offset="0.8889" stop-color="#8b6a57"/><stop offset="0.9048" stop-color="#896855"/><stop offset="0.9206" stop-color="#8a6957"/><stop offset="0.9365" stop-color="#8b6a57"/><stop offset="0.9524" stop-color="#8b6a57"/><stop offset="0.9683" stop-color="#8b6a57"/><stop offset="0.9841" stop-color="#876754"/><stop offset="1.0000" stop-color="#836451"/></linearGradient><linearGradient id="conc" gradientUnits="userSpaceOnUse" x1="528" y1="0" x2="760" y2="0"><stop offset="0.0005" stop-color="#b5b5b5"/><stop offset="0.0155" stop-color="#d5d5d5"/><stop offset="0.0512" stop-color="#bfbfbf"/><stop offset="0.0522" stop-color="#b8b8b8"/><stop offset="0.0659" stop-color="#d8d8d8"/><stop offset="0.0986" stop-color="#c2c2c2"/><stop offset="0.0996" stop-color="#b5b5b5"/><stop offset="0.1302" stop-color="#d5d5d5"/><stop offset="0.2021" stop-color="#bfbfbf"/><stop offset="0.2031" stop-color="#c0c0c0"/><stop offset="0.2349" stop-color="#e0e0e0"/><stop offset="0.3098" stop-color="#cacaca"/><stop offset="0.3108" stop-color="#bfbfbf"/><stop offset="0.3310" stop-color="#dfdfdf"/><stop offset="0.3788" stop-color="#c9c9c9"/><stop offset="0.3798" stop-color="#b4b4b4"/><stop offset="0.4052" stop-color="#d4d4d4"/><stop offset="0.4650" stop-color="#bebebe"/><stop offset="0.4660" stop-color="#c3c3c3"/><stop offset="0.4966" stop-color="#e3e3e3"/><stop offset="0.5685" stop-color="#cdcdcd"/><stop offset="0.5695" stop-color="#c3c3c3"/><stop offset="0.6078" stop-color="#e3e3e3"/><stop offset="0.6978" stop-color="#cdcdcd"/><stop offset="0.6988" stop-color="#bebebe"/><stop offset="0.7267" stop-color="#dedede"/><stop offset="0.7926" stop-color="#c8c8c8"/><stop offset="0.7936" stop-color="#bdbdbd"/><stop offset="0.8293" stop-color="#dddddd"/><stop offset="0.9133" stop-color="#c7c7c7"/><stop offset="0.9143" stop-color="#b6b6b6"/><stop offset="0.9397" stop-color="#d6d6d6"/><stop offset="0.9995" stop-color="#c0c0c0"/></linearGradient><linearGradient id="back" gradientUnits="userSpaceOnUse" x1="554.5" y1="0" x2="760" y2="0"><stop offset="0.0005" stop-color="#9f9f9f"/><stop offset="0.0120" stop-color="#c2c2c2"/><stop offset="0.0401" stop-color="#b8b8b8"/><stop offset="0.0798" stop-color="#a4a4a4"/><stop offset="0.0808" stop-color="#a0a0a0"/><stop offset="0.0931" stop-color="#c3c3c3"/><stop offset="0.1231" stop-color="#b9b9b9"/><stop offset="0.1654" stop-color="#a5a5a5"/><stop offset="0.1664" stop-color="#a6a6a6"/><stop offset="0.1801" stop-color="#c9c9c9"/><stop offset="0.2131" stop-color="#bfbfbf"/><stop offset="0.2598" stop-color="#ababab"/><stop offset="0.2608" stop-color="#9f9f9f"/><stop offset="0.2764" stop-color="#c2c2c2"/><stop offset="0.3139" stop-color="#b8b8b8"/><stop offset="0.3669" stop-color="#a4a4a4"/><stop offset="0.3679" stop-color="#a0a0a0"/><stop offset="0.3848" stop-color="#c3c3c3"/><stop offset="0.4253" stop-color="#b9b9b9"/><stop offset="0.4827" stop-color="#a5a5a5"/><stop offset="0.4837" stop-color="#a1a1a1"/><stop offset="0.5026" stop-color="#c4c4c4"/><stop offset="0.5479" stop-color="#bababa"/><stop offset="0.6122" stop-color="#a6a6a6"/><stop offset="0.6132" stop-color="#9a9a9a"/><stop offset="0.6341" stop-color="#bdbdbd"/><stop offset="0.6842" stop-color="#b3b3b3"/><stop offset="0.7552" stop-color="#9f9f9f"/><stop offset="0.7562" stop-color="#a0a0a0"/><stop offset="0.7654" stop-color="#c3c3c3"/><stop offset="0.7878" stop-color="#b9b9b9"/><stop offset="0.8195" stop-color="#a5a5a5"/><stop offset="0.8205" stop-color="#a2a2a2"/><stop offset="0.8360" stop-color="#c5c5c5"/><stop offset="0.8735" stop-color="#bbbbbb"/><stop offset="0.9265" stop-color="#a7a7a7"/><stop offset="0.9275" stop-color="#a4a4a4"/><stop offset="0.9380" stop-color="#c7c7c7"/><stop offset="0.9635" stop-color="#bdbdbd"/><stop offset="0.9995" stop-color="#a9a9a9"/></linearGradient><linearGradient id="wtop" gradientUnits="userSpaceOnUse" x1="560" y1="650" x2="690" y2="715"><stop offset="0" stop-color="#1c3646"/><stop offset="1" stop-color="#224657"/></linearGradient><linearGradient id="wfront" gradientUnits="userSpaceOnUse" x1="636" y1="0" x2="740" y2="0"><stop offset="0" stop-color="#69b3db"/><stop offset="1" stop-color="#72b8dd"/></linearGradient></defs><polygon points="554.5,606.7 637.9,602.2 846.6,633.5 759.6,643 743.5,643" fill="#17110f" /><polygon points="554.5,606.7 743.5,643 743.5,745 554.5,700" fill="url(#back)" /><polygon points="292.3,622.5 410.8,615.4 517.8,651.4 528.5,666.5 369,682.4 377.2,816.2 300.5,704.9" fill="#17110f" /><polygon points="410.8,615.4 516.7,651.7 551,664.5 528,666 400,623" fill="#2a2727" /><polygon points="512,650.5 555.2,648.7 740.2,706.8 636.1,722.3 635.2,701.2 551.6,671.8 550.7,664.7 528.5,666.5" fill="url(#wtop)" /><polygon points="528.5,666.5 550.7,664.7 553.4,759 614.8,748.3 615.7,703.8 635.2,701.2 636.1,743.5 740.2,726.8 740.2,643 759.6,643 755.8,742.2 531,788" fill="url(#conc)" /><polygon points="551.6,671.8 635.2,701.2 615.7,703.8 552.5,679.8" fill="#3d3b3b" /><polygon points="552.5,679.8 615.7,703.8 615.7,712.7 552.5,687" fill="#c3c3c3" /><polygon points="552.5,687 615.7,712.7 552.5,721.6" fill="#2c1e18" /><polygon points="552.5,721.6 614.8,713.6 614.8,748.3 553.4,759" fill="url(#wood3)" /><polygon points="636.1,722.3 740.2,706.8 740.2,726.8 636.1,743.5" fill="url(#wfront)" /><polygon points="369,682.4 528.5,666.5 531,788 377.2,816.2" fill="url(#wood)" /><polygon points="759.6,643 846.6,633.5 840.9,726.2 755.8,742.2" fill="url(#wood2)" /></svg>
<div class="a" style="left:184px;top:483px;width:44px;height:21px;border-radius:2px;background:linear-gradient(#f8f8f8 0%,#f3f3f3 50%,#e4e4e4 51%,#eaeaea 100%);font-size:11px;text-align:center;line-height:20px;color:#333">3D</div>
<div class="btn" style="left:230px;top:483px;width:20px;height:21px"></div>
<div class="btn" style="left:252px;top:483px;width:20px;height:21px"></div>
<div class="btn" style="left:274px;top:483px;width:20px;height:21px"></div>
<svg class="a" style="left:230px;top:483px" width="64" height="21" viewBox="0 0 64 21"><g transform="translate(2,1)"><path d="M8 1.5 L15.5 5 L8 7.5 L0.5 5 Z" fill="#d6d6d6"/><path d="M0.5 5 L8 7.5 L8 17.5 L0.5 14 Z" fill="#e02020"/><path d="M8 7.5 L15.5 5 L15.5 14 L8 17.5 Z" fill="#d6d6d6"/><path d="M8 1.5 L15.5 5 L15.5 14 L8 17.5 L0.5 14 L0.5 5 Z M0.5 5 L8 7.5 L15.5 5 M8 7.5 V17.5" fill="none" stroke="#000" stroke-width="1.1"/></g><g transform="translate(24,1)"><path d="M8 1.5 L15.5 5 L8 7.5 L0.5 5 Z" fill="#d6d6d6"/><path d="M0.5 5 L8 7.5 L8 17.5 L0.5 14 Z" fill="#d6d6d6"/><path d="M8 7.5 L15.5 5 L15.5 14 L8 17.5 Z" fill="#e02020"/><path d="M8 1.5 L15.5 5 L15.5 14 L8 17.5 L0.5 14 L0.5 5 Z M0.5 5 L8 7.5 L15.5 5 M8 7.5 V17.5" fill="none" stroke="#000" stroke-width="1.1"/></g><g transform="translate(46,1)"><path d="M8 1.5 L15.5 5 L8 7.5 L0.5 5 Z" fill="#e02020"/><path d="M0.5 5 L8 7.5 L8 17.5 L0.5 14 Z" fill="#d6d6d6"/><path d="M8 7.5 L15.5 5 L15.5 14 L8 17.5 Z" fill="#d6d6d6"/><path d="M8 1.5 L15.5 5 L15.5 14 L8 17.5 L0.5 14 L0.5 5 Z M0.5 5 L8 7.5 L15.5 5 M8 7.5 V17.5" fill="none" stroke="#000" stroke-width="1.1"/></g></svg>
</body></html>
